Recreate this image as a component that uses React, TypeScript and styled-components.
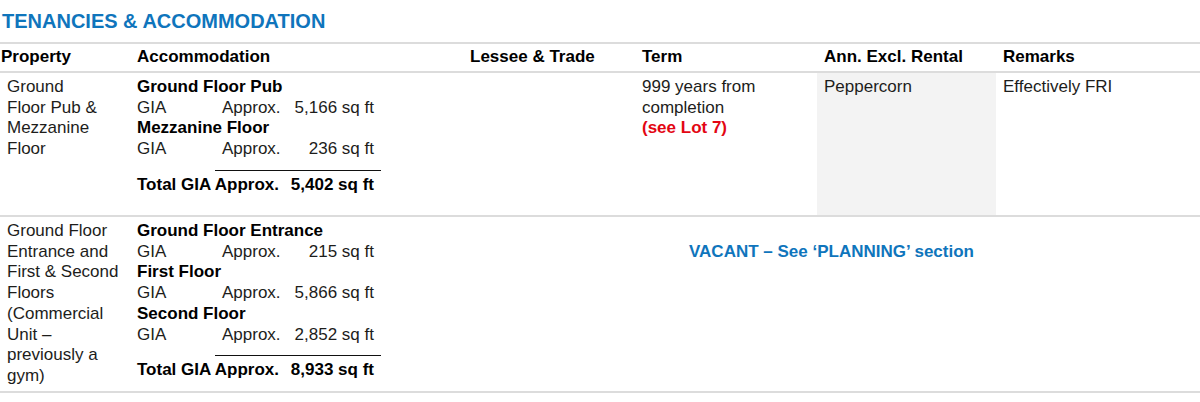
import React from 'react';
import styled, { createGlobalStyle } from 'styled-components';

const GlobalStyle = createGlobalStyle`
  html, body { margin: 0; padding: 0; background: #fff; }
  body {
    font-family: "Liberation Sans", Arial, Helvetica, sans-serif;
    color: #1d1d1b;
  }
`;

const BLUE = '#0f75bc';
const RULE = '#dcdcdc';
const COLS = '130px 333px 172px 182px 179px 1fr';

const Page = styled.div`
  width: 1200px;
  padding-top: 9px;
`;

const Title = styled.h2`
  margin: 0 0 9px 2px;
  font-size: 20px;
  line-height: 24px;
  font-weight: 700;
  color: ${BLUE};
`;

const Table = styled.div`
  border-top: 2px solid ${RULE};
  font-size: 17px;
  line-height: 20.7px;
`;

const Row = styled.div`
  display: grid;
  grid-template-columns: ${COLS};
  border-bottom: 2px solid ${RULE};
`;

const HeadCell = styled.div<{ $first?: boolean }>`
  padding: 3px 7px 3.3px ${(p) => (p.$first ? '1px' : '7px')};
  font-weight: 700;
  color: #000;
`;

const Cell = styled.div<{ $pb: number; $shade?: boolean; $flush?: boolean }>`
  padding: 4px ${(p) => (p.$flush ? '0' : '6px')} ${(p) => p.$pb}px
    ${(p) => (p.$flush ? '0' : '7px')};
  background: ${(p) => (p.$shade ? '#f3f3f3' : 'transparent')};
`;

const Accom = styled.div`
  display: grid;
  grid-template-columns: 85px 1fr auto;
  width: 248px;
`;

const AreaHeading = styled.div`
  grid-column: 1 / -1;
  padding-left: 7px;
  font-weight: 700;
  color: #000;
`;

const AreaLabel = styled.div`
  padding-left: 7px;
`;

const AreaValue = styled.div<{ $right?: boolean }>`
  padding: 0 7px;
  text-align: ${(p) => (p.$right ? 'right' : 'left')};
  white-space: nowrap;
`;

const TotalRule = styled.div`
  grid-column: 2 / -1;
  height: 1px;
  margin-top: 10px;
  background: #111;
`;

const TotalRow = styled.div`
  grid-column: 1 / -1;
  display: flex;
  justify-content: space-between;
  padding: 4px 7px 0;
  font-weight: 700;
  color: #000;
  white-space: nowrap;
`;

const RedNote = styled.div`
  color: #e30613;
  font-weight: 700;
`;

const Vacant = styled.div`
  grid-column: 3 / -1;
  padding-top: 25px;
  text-align: center;
  font-weight: 700;
  color: ${BLUE};
`;

type Area = { name: string; value: string };

const AccommodationBlock: React.FC<{ areas: Area[]; total: string }> = ({ areas, total }) => (
  <Accom>
    {areas.map((a) => (
      <React.Fragment key={a.name}>
        <AreaHeading>{a.name}</AreaHeading>
        <AreaLabel>GIA</AreaLabel>
        <AreaValue>Approx.</AreaValue>
        <AreaValue $right>{a.value}</AreaValue>
      </React.Fragment>
    ))}
    <TotalRule />
    <TotalRow>
      <span>Total GIA Approx.</span>
      <span>{total}</span>
    </TotalRow>
  </Accom>
);

export default function App() {
  return (
    <>
      <GlobalStyle />
      <Page>
        <Title>TENANCIES &amp; ACCOMMODATION</Title>
        <Table>
          <Row>
            <HeadCell $first>Property</HeadCell>
            <HeadCell>Accommodation</HeadCell>
            <HeadCell>Lessee &amp; Trade</HeadCell>
            <HeadCell>Term</HeadCell>
            <HeadCell>Ann. Excl. Rental</HeadCell>
            <HeadCell>Remarks</HeadCell>
          </Row>
          <Row>
            <Cell $pb={19.5}>
              Ground
              <br />
              Floor Pub &amp;
              <br />
              Mezzanine
              <br />
              Floor
            </Cell>
            <Cell $pb={19.5} $flush>
              <AccommodationBlock
                areas={[
                  { name: 'Ground Floor Pub', value: '5,166 sq ft' },
                  { name: 'Mezzanine Floor', value: '236 sq ft' },
                ]}
                total="5,402 sq ft"
              />
            </Cell>
            <Cell $pb={19.5} />
            <Cell $pb={19.5}>
              999 years from completion
              <RedNote>(see Lot 7)</RedNote>
            </Cell>
            <Cell $pb={19.5} $shade>
              Peppercorn
            </Cell>
            <Cell $pb={19.5}>Effectively FRI</Cell>
          </Row>
          <Row>
            <Cell $pb={4.4}>
              Ground Floor Entrance and First &amp; Second Floors (Commercial Unit – previously a gym)
            </Cell>
            <Cell $pb={4.4} $flush>
              <AccommodationBlock
                areas={[
                  { name: 'Ground Floor Entrance', value: '215 sq ft' },
                  { name: 'First Floor', value: '5,866 sq ft' },
                  { name: 'Second Floor', value: '2,852 sq ft' },
                ]}
                total="8,933 sq ft"
              />
            </Cell>
            <Vacant>VACANT – See ‘PLANNING’ section</Vacant>
          </Row>
        </Table>
      </Page>
    </>
  );
}
